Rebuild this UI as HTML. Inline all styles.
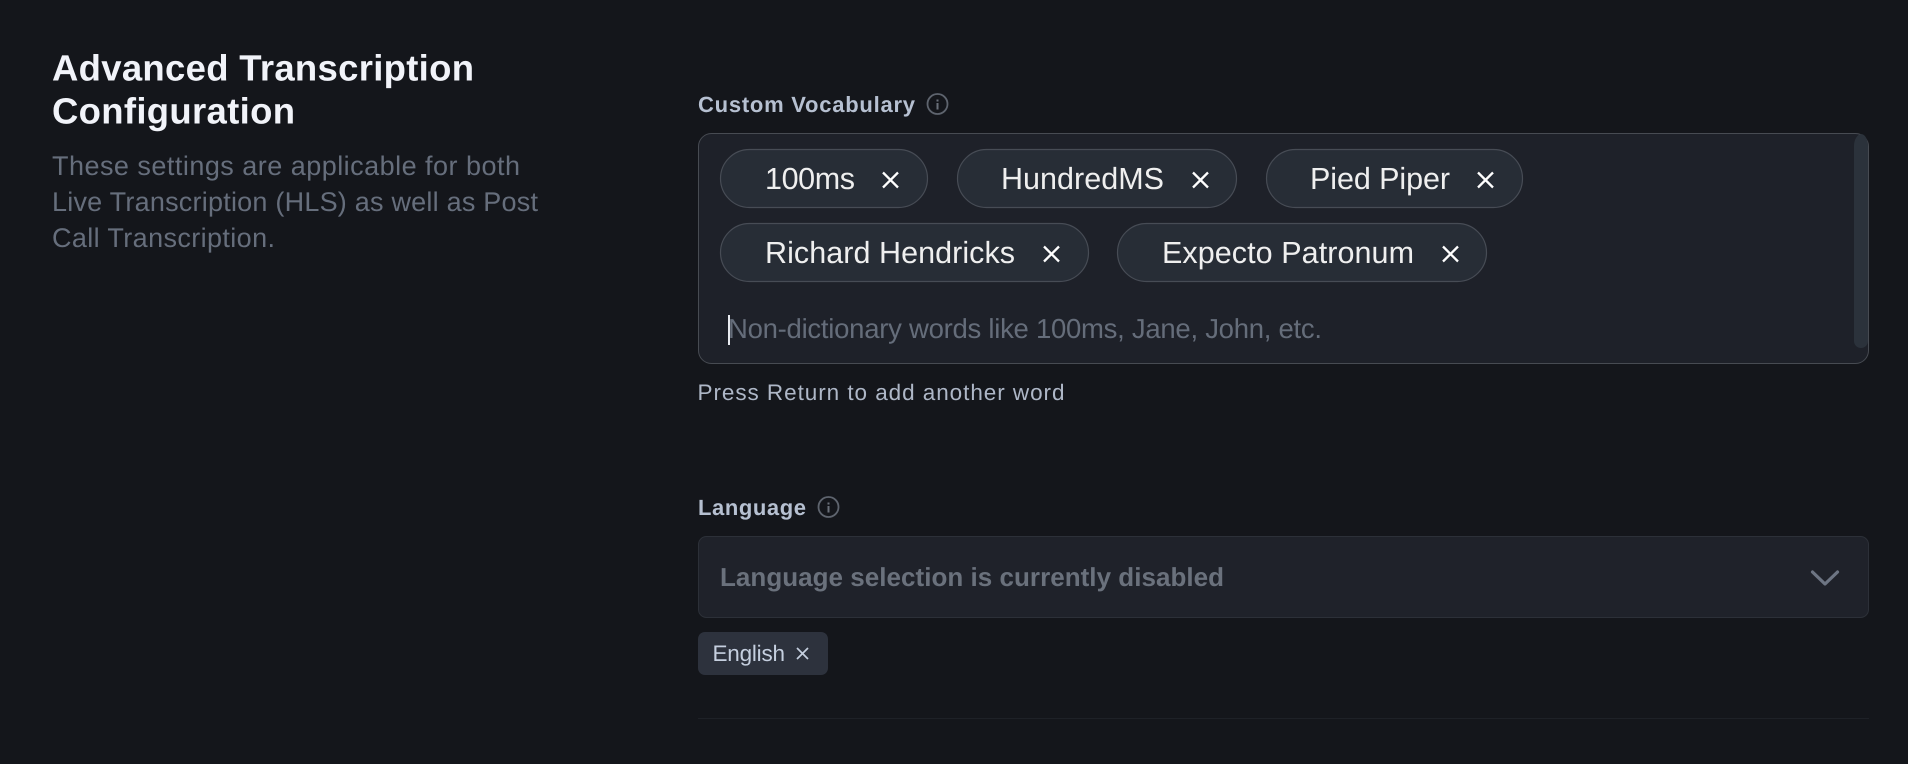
<!DOCTYPE html>
<html lang="en">
<head>
<meta charset="utf-8">
<title>Advanced Transcription Configuration</title>
<style>
html,body{margin:0;padding:0;background:#14161b;width:1908px;height:764px;overflow:hidden}
svg{display:block}
text{font-family:"Liberation Sans",Arial,sans-serif;text-rendering:geometricPrecision}
.t{font-size:36.500px;font-weight:700;fill:#f1f3f9}
.d{font-size:27px;fill:#666e7c}
.l{font-size:22px;font-weight:700;fill:#b6c0d1}
.c{font-size:30.500px;fill:#efefef}
.p{font-size:27.500px;fill:#656d7a}
.x{stroke:#fff;stroke-width:2.300;fill:none}
.chip{fill:#272d36;stroke:#474c55;stroke-width:1.200}
.i{fill:none;stroke:#5e646e;stroke-width:1.800}
</style>
</head>
<body>
<svg width="1908" height="764" viewBox="0 0 1908 764" xmlns="http://www.w3.org/2000/svg">
<rect width="1908" height="764" fill="#14161b"/>

<text class="t" x="52" y="80.500" textLength="422" lengthAdjust="spacing">Advanced Transcription</text>
<text class="t" x="52" y="123.500" textLength="243" lengthAdjust="spacing">Configuration</text>
<text class="d" x="52" y="175" textLength="468" lengthAdjust="spacing">These settings are applicable for both</text>
<text class="d" x="52" y="211" textLength="486" lengthAdjust="spacing">Live Transcription (HLS) as well as Post</text>
<text class="d" x="52" y="247" textLength="223" lengthAdjust="spacing">Call Transcription.</text>

<text class="l" x="698" y="112" textLength="217" lengthAdjust="spacing">Custom Vocabulary</text>
<circle class="i" cx="937.500" cy="104" r="10"/>
<rect x="936.500" y="103" width="2" height="6.500" fill="#6a707a"/><rect x="936.500" y="99.500" width="2" height="2" fill="#6a707a"/>

<rect x="698.500" y="133.500" width="1170" height="230" rx="13" fill="#1e2129" stroke="#474b52" stroke-width="1"/>
<path d="M1854 146a8 12 0 0 1 7-12h0a7 12 0 0 1 7 12v195a7 7 0 0 1-14 0z" fill="#2b323b"/>

<rect class="chip" x="720.500" y="149.500" width="207" height="58" rx="29"/>
<text class="c" x="765" y="189" textLength="90" lengthAdjust="spacing">100ms</text>
<path class="x" d="M883 172.500L898 187.500M898 172.500L883 187.500"/>

<rect class="chip" x="957.500" y="149.500" width="279" height="58" rx="29"/>
<text class="c" x="1001" y="189" textLength="163" lengthAdjust="spacing">HundredMS</text>
<path class="x" d="M1193 172.500L1208 187.500M1208 172.500L1193 187.500"/>

<rect class="chip" x="1266.500" y="149.500" width="256" height="58" rx="29"/>
<text class="c" x="1310" y="189" textLength="140" lengthAdjust="spacing">Pied Piper</text>
<path class="x" d="M1478 172.500L1493 187.500M1493 172.500L1478 187.500"/>

<rect class="chip" x="720.500" y="223.500" width="368" height="58" rx="29"/>
<text class="c" x="765" y="263" textLength="250" lengthAdjust="spacing">Richard Hendricks</text>
<path class="x" d="M1044 246.500L1059 261.500M1059 246.500L1044 261.500"/>

<rect class="chip" x="1117.500" y="223.500" width="369" height="58" rx="29"/>
<text class="c" x="1162" y="263" textLength="252" lengthAdjust="spacing">Expecto Patronum</text>
<path class="x" d="M1443 246.500L1458 261.500M1458 246.500L1443 261.500"/>

<rect x="728" y="315" width="2" height="30" fill="#e8ebf0"/>
<text class="p" x="728" y="338" textLength="594" lengthAdjust="spacing">Non-dictionary words like 100ms, Jane, John, etc.</text>

<text x="697.500" y="400" font-size="22.500" fill="#aeb7c7" textLength="367" lengthAdjust="spacing">Press Return to add another word</text>

<text class="l" x="698" y="515" textLength="108" lengthAdjust="spacing">Language</text>
<circle class="i" cx="828.500" cy="507" r="10"/>
<rect x="827.500" y="506" width="2" height="6.500" fill="#6a707a"/><rect x="827.500" y="502.500" width="2" height="2" fill="#6a707a"/>

<rect x="698.500" y="536.500" width="1170" height="81" rx="8" fill="#1f222a" stroke="#2c3038" stroke-width="1"/>
<text x="720" y="586" font-size="26" font-weight="700" fill="#6a717c" textLength="504" lengthAdjust="spacing">Language selection is currently disabled</text>
<path d="M1812.500 572L1825 584L1837.500 572" fill="none" stroke="#6d7583" stroke-width="3.200" stroke-linecap="round" stroke-linejoin="round"/>

<rect x="698" y="632" width="130" height="43" rx="7" fill="#2d323d"/>
<text x="712.500" y="661" font-size="22.500" fill="#c5cfdf" textLength="72.500" lengthAdjust="spacing">English</text>
<path d="M797 648L808 659M808 648L797 659" fill="none" stroke="#c5cfdf" stroke-width="1.700"/>

<rect x="698" y="718" width="1171" height="1" fill="#1e2127"/>
</svg>
</body>
</html>
